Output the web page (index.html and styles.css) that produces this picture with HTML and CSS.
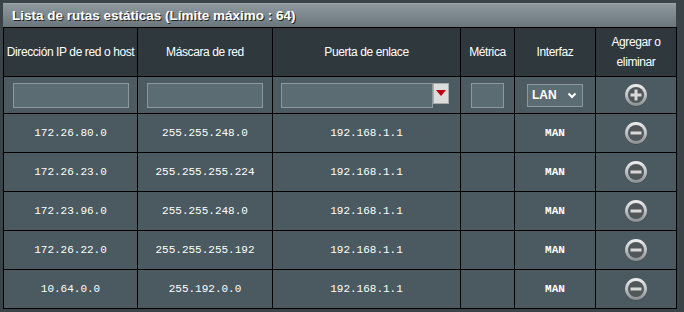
FILE: index.html
```html
<!DOCTYPE html>
<html>

<head>
    <title>Rutas estáticas</title>
    <link rel="stylesheet" href="styles.css">
</head>

<body>
    <div class="panel">
        <div class="panel-title">Lista de rutas estáticas (Límite máximo : 64)</div>
        <table class="routes">
            <colgroup>
                <col class="c-ip">
                <col class="c-mask">
                <col class="c-gw">
                <col class="c-metric">
                <col class="c-if">
                <col class="c-act">
            </colgroup>
            <tr class="head">
                <th>Dirección IP de red o host</th>
                <th>Máscara de red</th>
                <th>Puerta de enlace</th>
                <th>Métrica</th>
                <th>Interfaz</th>
                <th>Agregar o<br>eliminar</th>
            </tr>
            <tr class="add-row">
                <td><input type="text" class="field field-ip"></td>
                <td><input type="text" class="field field-ip"></td>
                <td>
                    <div class="gw-box">
                        <input type="text" class="field field-gw">
                        <span class="gw-btn">
                            <svg width="10" height="6" viewBox="0 0 10 6"><path d="M0 0 L10 0 L5 6 Z" fill="#c0000c"/></svg>
                        </span>
                    </div>
                </td>
                <td><input type="text" class="field field-metric"></td>
                <td>
                    <div class="if-select">
                        <span>LAN</span>
                        <svg width="10" height="7" viewBox="0 0 10 7"><path d="M1.5 1.5 L5 5 L8.5 1.5" fill="none" stroke="#fff" stroke-width="2"/></svg>
                    </div>
                </td>
                <td>
                    <svg class="icon" width="24" height="24" viewBox="0 0 24 24">
                        <defs>
                            <linearGradient id="ring" x1="0" y1="0" x2="0" y2="1">
                                <stop offset="0" stop-color="#f2f2f2"/>
                                <stop offset="1" stop-color="#8a8e90"/>
                            </linearGradient>
                        </defs>
                        <circle cx="12" cy="12.5" r="11" fill="#2c3438" opacity="0.6"/>
                        <circle cx="12" cy="12" r="11" fill="url(#ring)"/>
                        <circle cx="12" cy="12" r="8" fill="#4f575b"/>
                        <rect x="6.5" y="10.5" width="11" height="3" fill="#d8d8d8"/>
                        <rect x="10.5" y="6.5" width="3" height="11" fill="#d8d8d8"/>
                    </svg>
                </td>
            </tr>
            <tr class="route">
                <td>172.26.80.0</td>
                <td>255.255.248.0</td>
                <td>192.168.1.1</td>
                <td></td>
                <td class="iface">MAN</td>
                <td><svg class="icon" width="24" height="24" viewBox="0 0 24 24"><circle cx="12" cy="12.5" r="11" fill="#2c3438" opacity="0.6"/><circle cx="12" cy="12" r="11" fill="url(#ring)"/><circle cx="12" cy="12" r="8" fill="#4f575b"/><rect x="6.5" y="10.5" width="11" height="3" fill="#d8d8d8"/></svg></td>
            </tr>
            <tr class="route">
                <td>172.26.23.0</td>
                <td>255.255.255.224</td>
                <td>192.168.1.1</td>
                <td></td>
                <td class="iface">MAN</td>
                <td><svg class="icon" width="24" height="24" viewBox="0 0 24 24"><circle cx="12" cy="12.5" r="11" fill="#2c3438" opacity="0.6"/><circle cx="12" cy="12" r="11" fill="url(#ring)"/><circle cx="12" cy="12" r="8" fill="#4f575b"/><rect x="6.5" y="10.5" width="11" height="3" fill="#d8d8d8"/></svg></td>
            </tr>
            <tr class="route">
                <td>172.23.96.0</td>
                <td>255.255.248.0</td>
                <td>192.168.1.1</td>
                <td></td>
                <td class="iface">MAN</td>
                <td><svg class="icon" width="24" height="24" viewBox="0 0 24 24"><circle cx="12" cy="12.5" r="11" fill="#2c3438" opacity="0.6"/><circle cx="12" cy="12" r="11" fill="url(#ring)"/><circle cx="12" cy="12" r="8" fill="#4f575b"/><rect x="6.5" y="10.5" width="11" height="3" fill="#d8d8d8"/></svg></td>
            </tr>
            <tr class="route">
                <td>172.26.22.0</td>
                <td>255.255.255.192</td>
                <td>192.168.1.1</td>
                <td></td>
                <td class="iface">MAN</td>
                <td><svg class="icon" width="24" height="24" viewBox="0 0 24 24"><circle cx="12" cy="12.5" r="11" fill="#2c3438" opacity="0.6"/><circle cx="12" cy="12" r="11" fill="url(#ring)"/><circle cx="12" cy="12" r="8" fill="#4f575b"/><rect x="6.5" y="10.5" width="11" height="3" fill="#d8d8d8"/></svg></td>
            </tr>
            <tr class="route">
                <td>10.64.0.0</td>
                <td>255.192.0.0</td>
                <td>192.168.1.1</td>
                <td></td>
                <td class="iface">MAN</td>
                <td><svg class="icon" width="24" height="24" viewBox="0 0 24 24"><circle cx="12" cy="12.5" r="11" fill="#2c3438" opacity="0.6"/><circle cx="12" cy="12" r="11" fill="url(#ring)"/><circle cx="12" cy="12" r="8" fill="#4f575b"/><rect x="6.5" y="10.5" width="11" height="3" fill="#d8d8d8"/></svg></td>
            </tr>
        </table>
    </div>
</body>

</html>
```

FILE: styles.css
```css
body {
    margin: 0;
    background-color: #3a4448;
    font-family: "Liberation Sans", Arial, sans-serif;
    color: #fff;
}

.panel {
    padding: 3px 8px 4px 3px;
    width: 673px;
}

.panel-title {
    height: 24px;
    line-height: 24px;
    padding-left: 9px;
    font-size: 13.5px;
    font-weight: bold;
    text-shadow: 1px 1px 0 #222;
    background: linear-gradient(#8e999e, #6a777d);
    border-top: 1px solid #9ca6ab;
    box-sizing: border-box;
}

.routes {
    width: 673px;
    border-collapse: collapse;
    table-layout: fixed;
}

.c-ip { width: 134px; }
.c-mask { width: 135px; }
.c-gw { width: 188px; }
.c-metric { width: 54px; }
.c-if { width: 81px; }
.c-act { width: 81px; }

.routes th,
.routes td {
    border: 1px solid #000;
    text-align: center;
    padding: 0;
}

.routes th {
    background-color: #2e383d;
    font-size: 12px;
    font-weight: normal;
    letter-spacing: -0.4px;
    white-space: nowrap;
    height: 48px;
    line-height: 20px;
}

.add-row td {
    background-color: #4c5b61;
    height: 36px;
}

.route td {
    background-color: #4a5a60;
    height: 38px;
    font-family: "Liberation Mono", "Courier New", monospace;
    font-size: 11px;
}

.route td.iface {
    font-weight: bold;
}

.field {
    box-sizing: border-box;
    height: 25px;
    background-color: #5b6c72;
    border: 1px solid #8d989d;
    vertical-align: middle;
    margin: 0;
}

.field-ip {
    width: 116px;
}

.field-metric {
    width: 33px;
}

.gw-box {
    display: flex;
    align-items: flex-start;
    justify-content: center;
    margin-left: -3px;
}

.field-gw {
    width: 152px;
}

.gw-btn {
    display: flex;
    align-items: center;
    justify-content: center;
    width: 16px;
    height: 21px;
    background-color: #dcdcdc;
    border: 1px solid #aaa;
    box-sizing: border-box;
}

.if-select {
    display: inline-flex;
    align-items: center;
    justify-content: space-between;
    box-sizing: border-box;
    width: 56px;
    height: 23px;
    padding: 0 5px 0 4px;
    background-color: #5b6c72;
    border: 1px solid #8d989d;
    font-size: 12px;
    font-weight: bold;
    vertical-align: middle;
}

.icon {
    display: block;
    margin: 0 auto;
}
```
